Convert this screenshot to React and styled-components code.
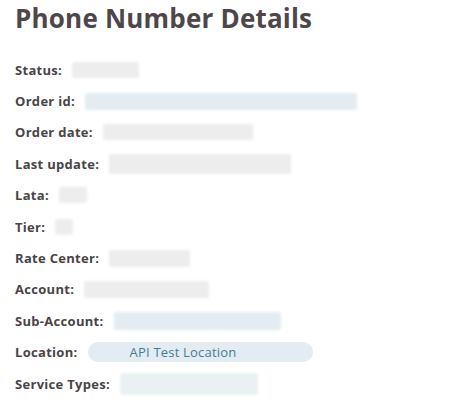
import React from "react";
import styled, { createGlobalStyle } from "styled-components";

const GlobalStyle = createGlobalStyle`
  body {
    margin: 0;
    background: #ffffff;
    font-family: "Open Sans", "Liberation Sans", sans-serif;
  }
`;

const Page = styled.div`
  padding: 3px 15px 0;
`;

const Title = styled.h1`
  margin: 0 0 20px;
  font-size: 26px;
  line-height: 31px;
  font-weight: 700;
  color: #4d474b;
  letter-spacing: 0.2px;
`;

const List = styled.div`
  display: flex;
  flex-direction: column;
`;

const Row = styled.div`
  display: flex;
  align-items: center;
  gap: 10px;
  height: 31.4px;
`;

const Label = styled.span`
  font-size: 13px;
  font-weight: 700;
  color: #4a4447;
  letter-spacing: 0.3px;
  white-space: nowrap;
`;

const Blurred = styled.div`
  width: ${(p) => p.$w}px;
  height: ${(p) => p.$h || 16}px;
  background: ${(p) => (p.$tint === "blue" ? "#e4ecf2" : p.$tint === "mint" ? "#e9f1f2" : "#ededed")};
  filter: blur(1.5px);
  border-radius: 2px;
`;

const Pill = styled.div`
  display: flex;
  align-items: center;
  width: 225px;
  height: 20px;
  border-radius: 10px;
  background: #e2ecf1;
  padding-left: 42px;
  box-sizing: border-box;
`;

const PillText = styled.span`
  font-size: 13px;
  color: #3d7e9c;
  letter-spacing: 0.2px;
`;

const rows = [
  { label: "Status:", w: 67 },
  { label: "Order id:", w: 272, tint: "blue", h: 17 },
  { label: "Order date:", w: 150 },
  { label: "Last update:", w: 182, h: 20 },
  { label: "Lata:", w: 28 },
  { label: "Tier:", w: 18 },
  { label: "Rate Center:", w: 81, h: 17 },
  { label: "Account:", w: 125, h: 17 },
  { label: "Sub-Account:", w: 167, tint: "blue", h: 18 },
];

export default function App() {
  return (
    <Page>
      <GlobalStyle />
      <Title>Phone Number Details</Title>
      <List>
        {rows.map((r) => (
          <Row key={r.label}>
            <Label>{r.label}</Label>
            <Blurred $w={r.w} $h={r.h} $tint={r.tint} />
          </Row>
        ))}
        <Row>
          <Label>Location:</Label>
          <Pill>
            <PillText>API Test Location</PillText>
          </Pill>
        </Row>
        <Row>
          <Label>Service Types:</Label>
          <Blurred $w={138} $h={22} $tint="mint" />
        </Row>
      </List>
    </Page>
  );
}
